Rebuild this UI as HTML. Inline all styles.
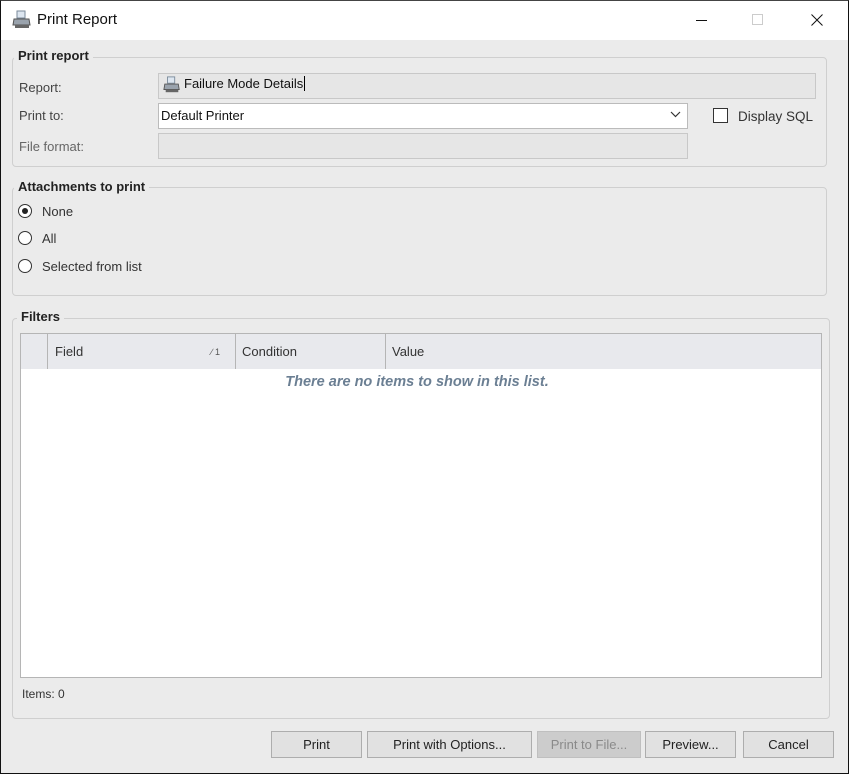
<!DOCTYPE html>
<html><head><style>
*{box-sizing:border-box;margin:0;padding:0}
body{width:849px;height:774px;overflow:hidden;background:#ebebeb;font-family:"Liberation Sans",sans-serif;font-size:13px;color:#222;position:relative}
.frame{position:absolute;inset:0;border:1px solid #111;border-top:1px solid #444}
.abs{position:absolute}
.title{left:1px;top:1px;width:847px;height:39px;background:#fff}
.grp{position:absolute;border:1px solid #cfcfcf;border-radius:4px}
.gl{position:absolute;background:#ebebeb;font-weight:bold;font-size:13px;padding:0 4px;color:#222}
.lbl{position:absolute;color:#444}
.box{position:absolute;border:1px solid #c8c8c8;background:#e6e6e6}
.btn{position:absolute;top:731px;height:27px;border:1px solid #adadad;background:#e1e1e1;text-align:center;line-height:25px;color:#222}
.radio{position:absolute;width:14px;height:14px;border:1px solid #333;border-radius:50%;background:#fff}
</style></head><body>
<div class="abs title"></div>
<svg class="abs" style="left:12px;top:10px" width="20" height="20" viewBox="0 0 20 20"><rect x="5" y="1" width="8" height="7" fill="#dde6f0" stroke="#7a8a9a"/><path d="M2 9h15l1 6H1z" fill="#9aa3ad" stroke="#555"/><rect x="3" y="15" width="14" height="3" fill="#666"/></svg>
<div class="abs" style="left:37px;top:11px;font-size:15px;color:#111">Print Report</div>
<div class="abs" style="left:696px;top:20px;width:11px;height:1px;background:#111"></div>
<div class="abs" style="left:752px;top:14px;width:11px;height:11px;border:1px solid #ccc"></div>
<svg class="abs" style="left:811px;top:14px" width="12" height="12"><path d="M0.5 0.5l11 11M11.5 0.5l-11 11" stroke="#111" stroke-width="1"/></svg>

<div class="grp" style="left:12px;top:57px;width:815px;height:110px"></div>
<div class="gl" style="left:14px;top:48px">Print report</div>
<div class="lbl" style="left:19px;top:80px">Report:</div>
<div class="lbl" style="left:19px;top:108px">Print to:</div>
<div class="lbl" style="left:19px;top:139px;color:#666">File format:</div>
<div class="box" style="left:158px;top:73px;width:658px;height:26px"></div>
<svg class="abs" style="left:163px;top:76px" width="18" height="18" viewBox="0 0 20 20"><rect x="5" y="1" width="8" height="7" fill="#dde6f0" stroke="#7a8a9a"/><path d="M2 9h15l1 6H1z" fill="#9aa3ad" stroke="#555"/><rect x="3" y="15" width="14" height="3" fill="#666"/></svg>
<div class="abs" style="left:184px;top:76px;color:#111">Failure Mode Details<span style="border-left:1px solid #000;margin-left:1px"></span></div>
<div class="box" style="left:158px;top:103px;width:530px;height:26px;background:#fff;border-color:#bbb"></div>
<div class="abs" style="left:161px;top:108px;color:#111">Default Printer</div>
<svg class="abs" style="left:670px;top:111px" width="11" height="7"><path d="M1 1l4.5 4.5L10 1" fill="none" stroke="#333" stroke-width="1.2"/></svg>
<div class="box" style="left:158px;top:133px;width:530px;height:26px"></div>
<div class="abs" style="left:713px;top:108px;width:15px;height:15px;border:1px solid #333;background:#fff"></div>
<div class="abs" style="left:738px;top:109px;color:#333;font-size:13.5px">Display SQL</div>

<div class="grp" style="left:12px;top:187px;width:815px;height:109px"></div>
<div class="gl" style="left:14px;top:179px">Attachments to print</div>
<div class="radio" style="left:18px;top:204px"><div style="position:absolute;left:3px;top:3px;width:6px;height:6px;border-radius:50%;background:#222"></div></div>
<div class="lbl" style="left:42px;top:204px;color:#333">None</div>
<div class="radio" style="left:18px;top:231px"></div>
<div class="lbl" style="left:42px;top:231px;color:#333">All</div>
<div class="radio" style="left:18px;top:259px"></div>
<div class="lbl" style="left:42px;top:259px;color:#333">Selected from list</div>

<div class="grp" style="left:12px;top:318px;width:818px;height:401px"></div>
<div class="gl" style="left:17px;top:309px">Filters</div>
<div class="abs" style="left:20px;top:333px;width:802px;height:345px;background:#fff;border:1px solid #b5b5b5"></div>
<div class="abs" style="left:21px;top:334px;width:800px;height:35px;background:#e8e9ed"></div>
<div class="abs" style="left:47px;top:334px;width:1px;height:35px;background:#b5b5b5"></div>
<div class="abs" style="left:235px;top:334px;width:1px;height:35px;background:#b5b5b5"></div>
<div class="abs" style="left:385px;top:334px;width:1px;height:35px;background:#b5b5b5"></div>
<div class="abs" style="left:55px;top:344px;color:#333">Field</div>
<div class="abs" style="left:211px;top:347px;font-size:9px;color:#555">∕ 1</div>
<div class="abs" style="left:242px;top:344px;color:#333">Condition</div>
<div class="abs" style="left:392px;top:344px;color:#333">Value</div>
<div class="abs" style="left:283px;top:374px;width:268px;text-align:center;font-style:italic;font-weight:bold;font-size:14.5px;color:#6b7f93;white-space:nowrap">There are no items to show in this list.</div>
<div class="abs" style="left:22px;top:687px;font-size:12px;color:#333">Items: 0</div>

<div class="btn" style="left:271px;width:91px">Print</div>
<div class="btn" style="left:367px;width:165px">Print with Options...</div>
<div class="btn" style="left:537px;width:104px;background:#cccccc;border-color:#bfbfbf;color:#8a8a8a">Print to File...</div>
<div class="btn" style="left:645px;width:91px">Preview...</div>
<div class="btn" style="left:743px;width:91px">Cancel</div>
<div class="frame"></div>
</body></html>
